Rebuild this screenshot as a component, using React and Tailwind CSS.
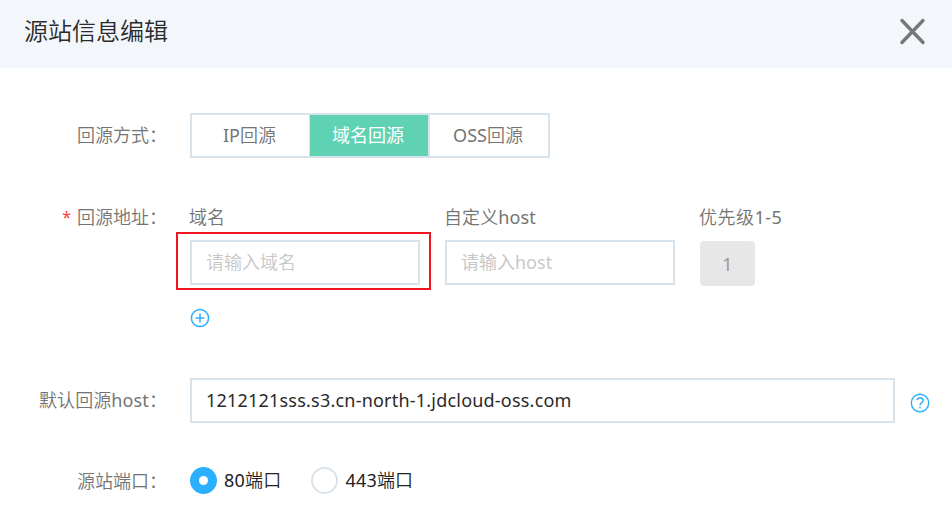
import React from "react";

function Row({ label, required, className = "", labelClass = "pb-[2px]", children }) {
  return (
    <div className={`flex ${className}`}>
      <div
        className={`w-[167px] mr-[23px] h-[45px] shrink-0 flex items-center justify-end whitespace-nowrap text-[#747474] ${labelClass}`}
      >
        {required && <span className="mr-[6px] text-[16px] font-normal text-[#ff3b3b]">*</span>}
        <span>{label}</span>
      </div>
      {children}
    </div>
  );
}

const inputClass =
  "block h-[45px] border-2 border-[#d9e3eb] bg-white pl-[14px] pr-[15px] pb-[2px] outline-none placeholder:text-[#c8c8c8] placeholder:opacity-100";

function Segment({ className, children }) {
  return <button className={`h-[41px] pb-[2px] pr-[2px] flex items-center justify-center ${className}`}>{children}</button>;
}

function Radio({ checked, children }) {
  return (
    <label className="flex items-center gap-[7px] text-[#222]">
      <span
        className={`size-[27px] rounded-full flex items-center justify-center ${
          checked ? "bg-[#2bafff]" : "border-2 border-[#d9e3eb]"
        }`}
      >
        {checked && <span className="size-[9px] rounded-full bg-white" />}
      </span>
      <span className="pb-[2px] tracking-[0.2px]">{children}</span>
    </label>
  );
}

function Latin({ children }) {
  return <span className="font-normal">{children}</span>;
}

export default function App() {
  return (
    <div className="w-[952px] h-[527px] overflow-hidden bg-white text-[18px] leading-[24px] font-[350] font-['Noto_Sans','Noto_Sans_CJK_SC',sans-serif]">
      <header className="h-[68px] bg-[#f3f6fb] pl-[24px] pr-[26px] flex items-center justify-between">
        <h1 className="text-[24px] leading-[36px] text-[#2a2a2a] pb-[6px] font-[350]">源站信息编辑</h1>
        <button className="mb-[5px]" aria-label="关闭">
          <svg width="27" height="27" viewBox="0 0 27 27" fill="none" stroke="#777" strokeWidth="3.4" strokeLinecap="round">
            <path d="M3 2.5L24 24.5M24 2.5L3 24.5" />
          </svg>
        </button>
      </header>

      <Row label="回源方式：" className="mt-[45px]">
        <div className="w-[360px] h-[45px] border-2 border-[#d9e3eb] bg-[#d9e3eb] flex">
          <Segment className="w-[117px] mr-px bg-white text-[#747474]"><Latin>IP</Latin>回源</Segment>
          <Segment className="w-[118px] mr-[2px] bg-[#60d2b4] text-white font-normal">域名回源</Segment>
          <Segment className="w-[118px] bg-white text-[#747474]"><Latin>OSS</Latin>回源</Segment>
        </div>
      </Row>

      <Row label="回源地址：" required className="mt-[37px]">
        <div>
          <div className="flex text-[#747474]">
            <div className="w-[255px]">
              <div className="h-[45px] flex items-center pb-[2px] -ml-px">域名</div>
              <div className="relative">
                <input className={`${inputClass} w-[230px]`} placeholder="请输入域名" />
                <div className="pointer-events-none absolute -left-[14px] -top-[8px] w-[255px] h-[58px] border-2 border-[#f0141e]" />
              </div>
            </div>
            <div className="w-[255px]">
              <div className="h-[45px] flex items-center pb-[2px] -ml-px tracking-[0.1px]">自定义<Latin>host</Latin></div>
              <input className={`${inputClass} w-[230px] font-normal`} placeholder="请输入host" />
            </div>
            <div>
              <div className="h-[45px] flex items-center pb-[2px] -ml-px tracking-[0.5px]">优先级<Latin>1-5</Latin></div>
              <div className="mt-px w-[55px] h-[45px] rounded-[4px] bg-[#e7e7e7] text-[#999] font-normal flex items-center justify-center">1</div>
            </div>
          </div>
          <button className="block mt-[22px]" aria-label="添加">
            <svg width="20" height="20" viewBox="0 0 20 20" fill="none" stroke="#2bafff" strokeWidth="1.5">
              <circle cx="10" cy="10" r="8.6" />
              <path d="M10 5.5V14.5M5.5 10H14.5" />
            </svg>
          </button>
        </div>
      </Row>

      <Row label={<>默认回源<Latin>host</Latin>：</>} className="mt-[50px]" labelClass="pb-[2px] tracking-[0.1px]">
        <input
          className={`${inputClass} w-[705px] text-[#2a2a2a] font-normal tracking-[0.21px]`}
          defaultValue="1212121sss.s3.cn-north-1.jdcloud-oss.com"
        />
        <svg className="ml-[15px] mt-[15px]" width="20" height="20" viewBox="0 0 20 20" fill="none" stroke="#2bafff" strokeWidth="1.4">
          <circle cx="10" cy="10" r="8.7" />
          <path d="M7 7C7.5 5.5 8.7 5 10 5C11.9 5 13.2 5.9 13.2 7.5C13.2 9.7 10 9.6 10 12.2" />
          <path d="M10 13.8V15.4" />
        </svg>
      </Row>

      <Row label="源站端口：" className="mt-[35px]" labelClass="">
        <div className="h-[45px] flex items-center gap-[30px]">
          <Radio checked><Latin>80</Latin>端口</Radio>
          <Radio><Latin>443</Latin>端口</Radio>
        </div>
      </Row>
    </div>
  );
}
